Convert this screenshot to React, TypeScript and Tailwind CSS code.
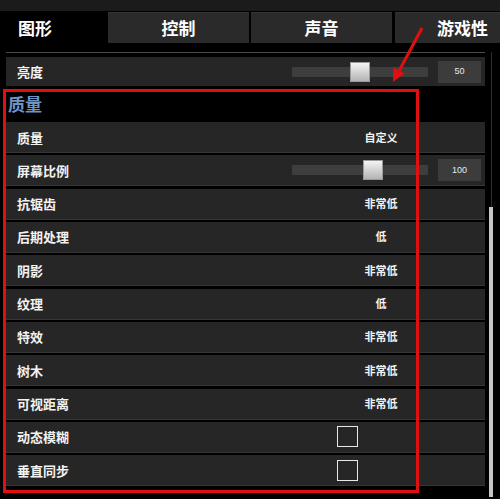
import React from "react";

type Row =
  | { label: string; kind: "value"; value: string }
  | { label: string; kind: "slider"; value: string; thumb: number }
  | { label: string; kind: "check" };

const rows: Row[] = [
  { label: "质量", kind: "value", value: "自定义" },
  { label: "屏幕比例", kind: "slider", value: "100", thumb: 71 },
  { label: "抗锯齿", kind: "value", value: "非常低" },
  { label: "后期处理", kind: "value", value: "低" },
  { label: "阴影", kind: "value", value: "非常低" },
  { label: "纹理", kind: "value", value: "低" },
  { label: "特效", kind: "value", value: "非常低" },
  { label: "树木", kind: "value", value: "非常低" },
  { label: "可视距离", kind: "value", value: "非常低" },
  { label: "动态模糊", kind: "check" },
  { label: "垂直同步", kind: "check" },
];

function Slider({ value, thumb }: { value: string; thumb: number }) {
  return (
    <div className="flex items-center">
      <div className="relative w-[136px] h-[10px] bg-[#3e3e3e]">
        <div
          className="absolute top-[-5px] w-[20px] h-[20px] bg-gradient-to-b from-[#f4f4f4] to-[#b4b4b4] border border-[#9a9a9a]"
          style={{ left: thumb }}
        />
      </div>
      <div className="ml-[10px] mr-[4px] w-[43px] h-[22px] bg-[#3c3c3c] flex items-center justify-center text-[9px] text-[#e8e8e8] font-[Liberation_Sans,sans-serif]">
        {value}
      </div>
    </div>
  );
}

function SettingRow({ row }: { row: Row }) {
  return (
    <div className="h-[31px] bg-[#262626] border-b border-[#363636] flex items-center pl-[11px]">
      <div className="flex-1 text-[13px] font-bold text-[#f2f2f2] leading-none">{row.label}</div>
      {row.kind === "value" && (
        <div className="w-[100px] mr-[54px] text-center text-[11px] font-bold text-[#f2f2f2] leading-none">
          {row.value}
        </div>
      )}
      {row.kind === "slider" && <Slider value={row.value} thumb={row.thumb} />}
      {row.kind === "check" && (
        <div className="w-[21px] h-[21px] border-[1.5px] border-[#e8e8e8] mr-[127px]" />
      )}
    </div>
  );
}

export default function App() {
  return (
    <div
      className="relative w-[500px] h-[499px] bg-black overflow-hidden"
      style={{ fontFamily: '"Noto Sans CJK SC", "Noto Sans", sans-serif' }}
    >
      <div className="h-[11px] bg-[#1b1b1b]" />
      <div className="mt-[1px] h-[31px] flex">
        <div className="w-[108px] bg-black flex items-center pl-[18px] text-[17px] font-bold text-white">图形</div>
        <div className="w-[141px] bg-[#2a2a2a] border-t border-[#353535] flex items-center justify-center text-[17px] font-bold text-white">控制</div>
        <div className="ml-[2px] w-[141px] bg-[#2a2a2a] border-t border-[#353535] flex items-center justify-center text-[17px] font-bold text-white">声音</div>
        <div className="ml-[3px] flex-1 bg-[#2a2a2a] border-t border-[#353535] flex items-center pl-[42px] text-[17px] font-bold text-white">游戏性</div>
      </div>
      <div className="mt-[9px] ml-[6px] w-[479px] h-[1px] bg-[#4a4a4a]" />
      <div className="mt-[4px] ml-[6px] w-[479px]">
        <div className="h-[29px] bg-[#262626] flex items-center pl-[11px]">
          <div className="flex-1 text-[13px] font-bold text-[#f2f2f2] leading-none">亮度</div>
          <Slider value="50" thumb={58} />
        </div>
        <div className="h-[36px] flex items-center pl-[2px] text-[17px] font-bold text-[#7096c8]">质量</div>
        <div className="flex flex-col gap-y-[2.33px]">
          {rows.map((r) => (
            <SettingRow key={r.label} row={r} />
          ))}
        </div>
      </div>

      {/* scrollbar */}
      <div className="absolute left-[491px] top-[52px] w-[1px] h-[155px] bg-[#2e2e2e]" />
      <div className="absolute left-[489px] top-[207px] w-[4px] h-[290px] bg-[#c6c6c6]" />

      {/* red highlight */}
      <div className="absolute left-[3px] top-[89px] w-[416px] h-[404px] border-[3px] border-[#e01010]" />
      <svg className="absolute left-0 top-0" width="500" height="499">
        <line x1="422" y1="28" x2="399" y2="71" stroke="#e01010" strokeWidth="3" />
        <polygon points="393,82 404.5,73.5 393.5,67.5" fill="#e01010" />
      </svg>
    </div>
  );
}
